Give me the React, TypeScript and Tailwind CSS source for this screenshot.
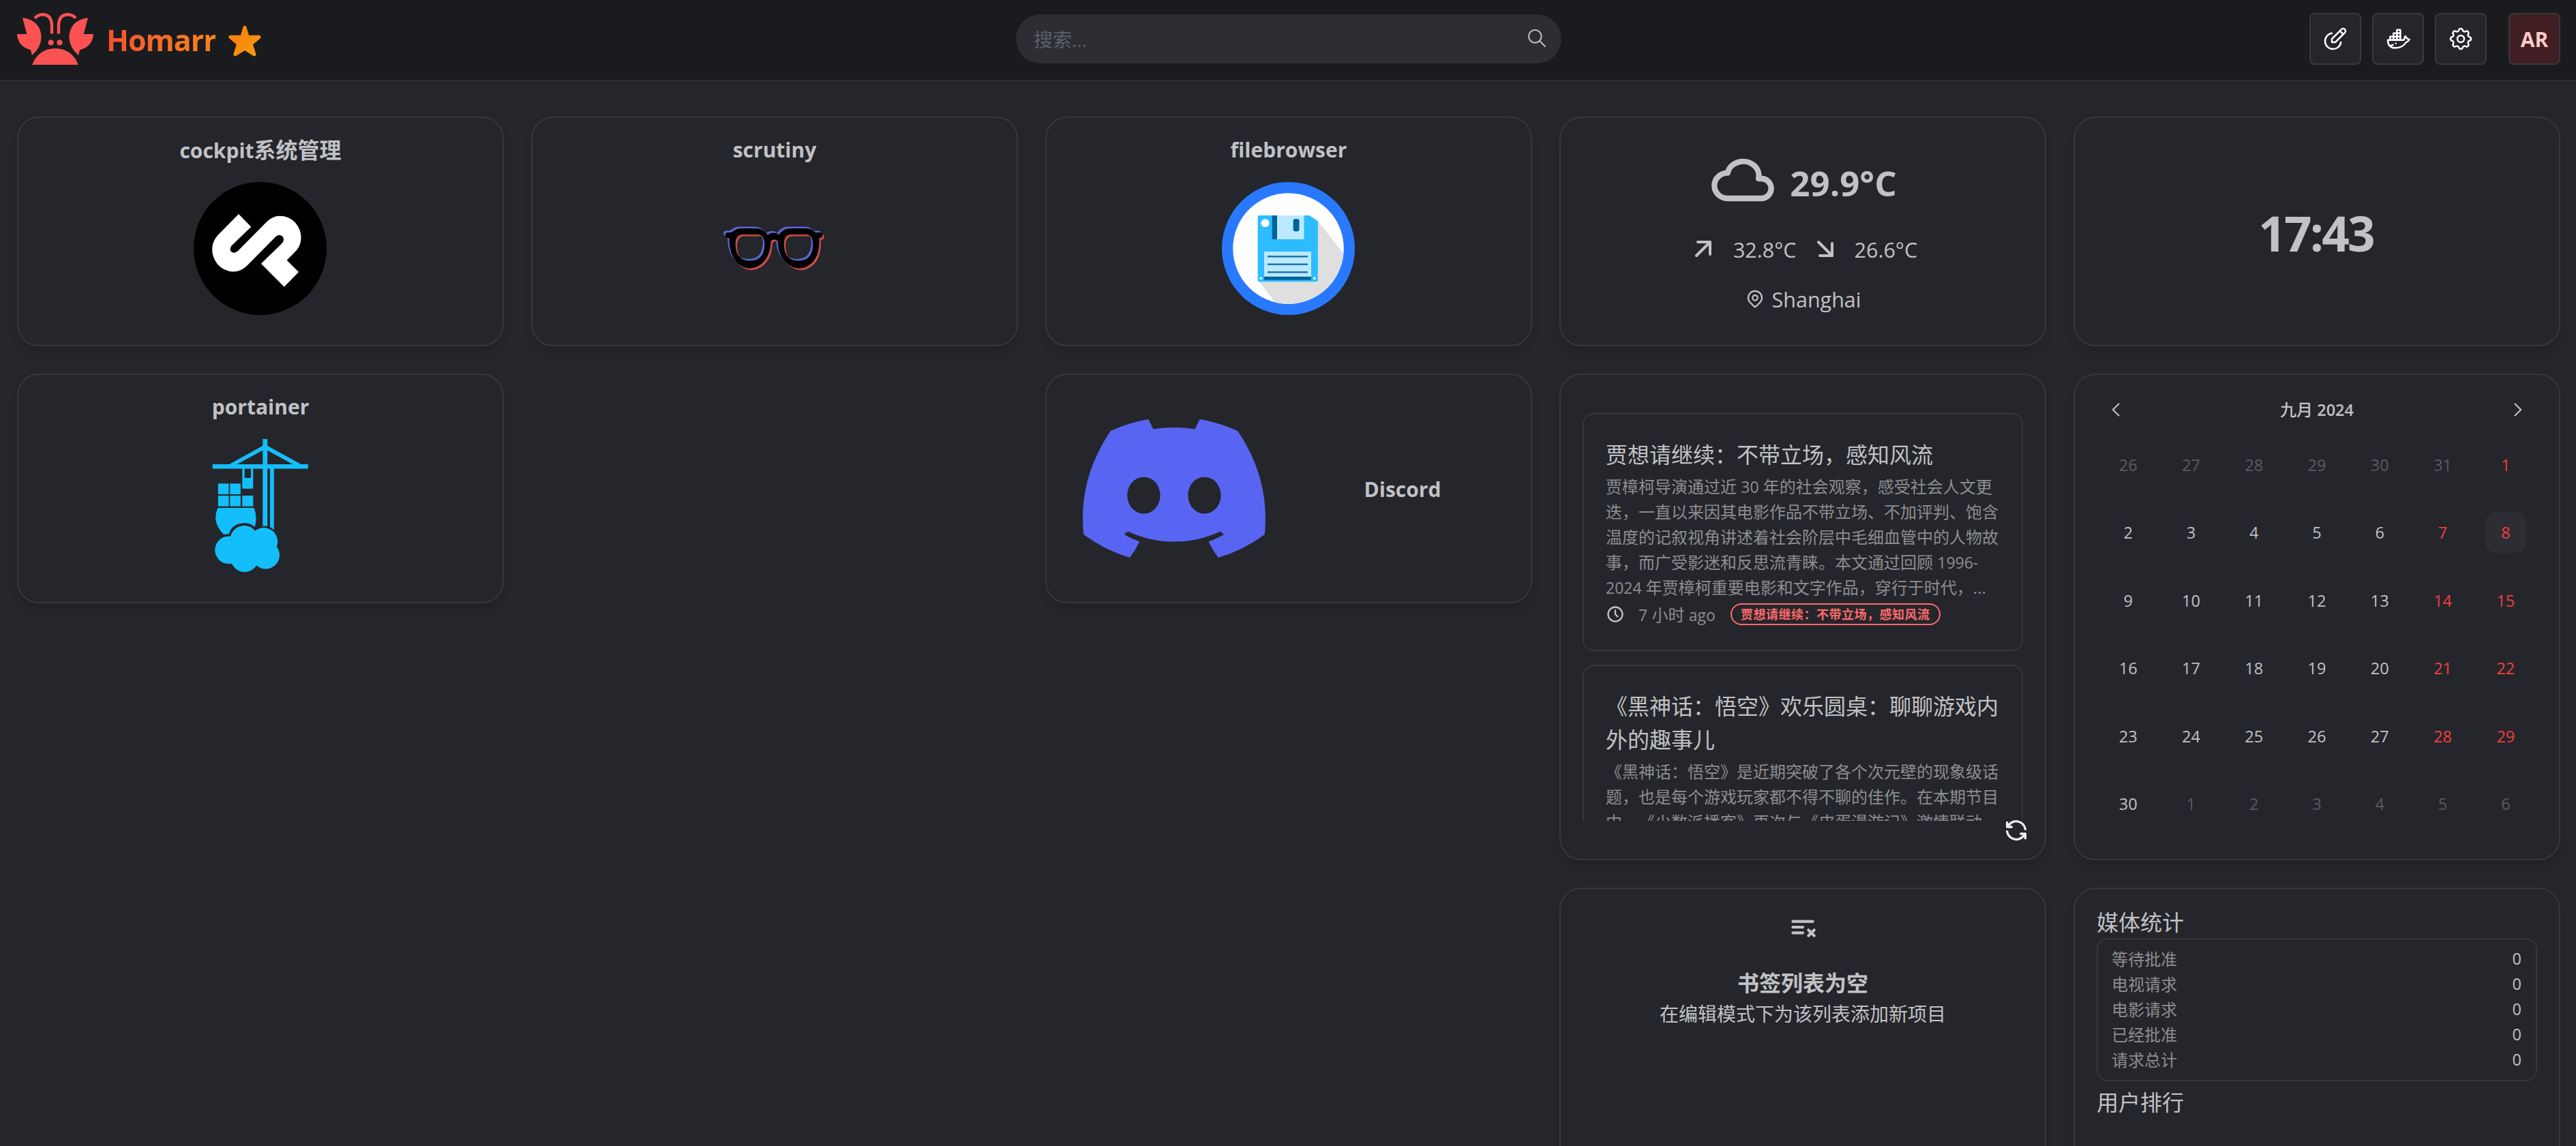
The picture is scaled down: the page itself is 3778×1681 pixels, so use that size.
import React from 'react';
import {
  TbArrowDownRight,
  TbArrowUpRight,
  TbBrandDocker,
  TbClock,
  TbCloud,
  TbEditCircle,
  TbMapPin,
  TbPlaylistX,
  TbRefresh,
  TbSearch,
  TbSettings,
} from 'react-icons/tb';

function Card({ className = '', children }: { className?: string; children?: React.ReactNode }) {
  return (
    <section
      className={`relative overflow-hidden rounded-[32px] border-2 border-[#36383e] bg-[#25262b] shadow-[0_10px_16px_-6px_rgba(0,0,0,0.18)] ${className}`}
    >
      {children}
    </section>
  );
}

function AppCard({ title, cjk, children }: { title: string; cjk?: string; children: React.ReactNode }) {
  return (
    <Card className="flex flex-col items-center pt-[25px]">
      <h2 className="h-[44px] text-[30px] leading-[44px] font-bold whitespace-nowrap">
        {title}
        {cjk && <span className="text-[32px]">{cjk}</span>}
      </h2>
      <div className="mt-[25px] -ml-px size-[195px]">{children}</div>
    </Card>
  );
}

function HomarrLogo() {
  const side = (
    <>
      <path d="M8 7Q35 11 35.6 36Q35 51 22 62L20 54.3Q1 49 0 31L14.3 31Z" fill="#fa5252" />
      <path d="M51 30.5V18Q50.5 2.4 37.5 2.2Q30.5 2.4 26 7.6" fill="none" stroke="#fa5252" strokeWidth="4.4" />
      <circle cx="49.6" cy="43.4" r="4.2" fill="#fa5252" />
    </>
  );
  return (
    <svg viewBox="0 0 112 76" className="h-[76px] w-[112px]">
      <g>{side}</g>
      <g transform="translate(112 0) scale(-1 1)">{side}</g>
      <path d="M22 76Q32 52 56 52Q80 52 90 76Z" fill="#fa5252" />
    </svg>
  );
}

function Star() {
  return (
    <svg viewBox="0 0 48.5 46" className="h-[46px] w-[48px]">
      <defs>
        <linearGradient id="star" x1="0" y1="0" x2="1" y2="1">
          <stop offset="0" stopColor="#f97c15" />
          <stop offset="1" stopColor="#f79c05" />
        </linearGradient>
      </defs>
      <path
        d="M24.2 3L28.4 17L45.6 17.2L33.6 27.4L38.4 43L24.2 34.2L10 43L14.8 27.4L2.8 17.2L20 17Z"
        fill="url(#star)"
        stroke="url(#star)"
        strokeWidth="5"
        strokeLinejoin="round"
      />
    </svg>
  );
}

function CockpitIcon() {
  return (
    <svg viewBox="0 0 195 195">
      <circle cx="97.5" cy="97.5" r="97.5" fill="#000" />
      <path
        d="M66 47L84.3 65.7L55.5 93.5Q52 99 55 102Q59 105.5 64.5 101.5L107 58.5Q116 49.7 126 49.7Q140 49.7 149 59.5Q158 70 157.5 83Q157 93 151 100L136.7 114.7L154 132L132.8 153.7L98.9 119.7L129.5 90Q133.5 85.5 131 80.5Q127 75.5 121 79.5L79 122Q70 131.5 58 131.5Q44 131 34.5 120Q26.5 109 27.2 97Q28 86 35.9 77.5Z"
        fill="#fff"
      />
    </svg>
  );
}

const GLASSES =
  'M28 74L33 74Q36 73.6 39 71Q43 68 48 68L70 68Q82 68 88 77.5Q91 74.5 97 74.5Q102 74.5 104 77.5Q110 68 121 68L145 68Q152 68 158 74L165 74Q168.5 75 168.3 78Q168 82 163.4 82.5Q164.8 108 151.5 120Q134 133.5 117 120Q103 108 103 88Q102 84.5 97.6 84.5Q93 84.5 92.4 88Q92 108 79 120Q61 133.5 45 120Q31 107 31.6 82.5Q26 82.5 25.6 78Q25.6 75 28 74ZM51 77Q41 77 40.6 91Q41 115.5 62 115.5Q83 115.5 83.4 91Q83 77 73 77ZM122 77Q112 77 111.8 91Q112 115.5 133 115.5Q154 115.5 154.2 91Q154 77 144 77Z';

function ScrutinyIcon() {
  return (
    <svg viewBox="0 0 195 195" fillRule="evenodd">
      <path d={GLASSES} fill="#5c68d6" transform="translate(-2.4 -2.4)" />
      <path d={GLASSES} fill="#cb4a4c" transform="translate(2.4 2.4)" />
      <path d={GLASSES} fill="#000" />
    </svg>
  );
}

function FileBrowserIcon() {
  return (
    <svg viewBox="0 0 195 195">
      <defs>
        <clipPath id="fb-disc">
          <circle cx="97.5" cy="97.5" r="81.3" />
        </clipPath>
      </defs>
      <circle cx="97.5" cy="97.5" r="97.5" fill="#2979ff" />
      <circle cx="97.5" cy="97.5" r="81.3" fill="#fff" />
      <path d="M140.7 57L185 113V195H93L54.5 146Z" fill="#dfdfdf" clipPath="url(#fb-disc)" />
      <path d="M55.3 49H128.5L140.8 57.5V143.5Q140.8 146.3 138 146.3H55.3Q52.6 146.3 52.6 143.5V51.5Q52.6 49 55.3 49Z" fill="#2cbcff" />
      <rect x="73.7" y="49" width="7.5" height="35" fill="#00639b" />
      <rect x="81" y="49" width="39.5" height="35" fill="#bbe9ff" />
      <rect x="104.6" y="54" width="9" height="18.5" rx="3.4" fill="#00639b" />
      <circle cx="63.5" cy="60.3" r="6" fill="#fff" />
      <rect x="62" y="102" width="69" height="37" fill="#bbe9ff" />
      <path d="M67 109.3H126M67 120.8H126M67 132.3H126" stroke="#1b78ab" strokeWidth="2.4" />
      <rect x="62" y="138.8" width="69" height="4.8" fill="#00639b" />
      <circle cx="57.2" cy="141.3" r="2" fill="#e6f7ff" />
      <circle cx="136" cy="141.3" r="2" fill="#e6f7ff" />
    </svg>
  );
}

function PortainerIcon() {
  return (
    <svg viewBox="0 0 195 195" fill="#13bef9">
      <rect x="101.3" y="0" width="6.9" height="127.7" />
      <path d="M112 43H117.8V133L112 129Z" />
      <rect x="27.7" y="37" width="140.2" height="6.5" />
      <path d="M104.7 8L52.4 37H63.5L104.7 14.8L145.3 37H157.6Z" />
      <path d="M71.3 43H74.7V57H84V43H87.3V72.7H71.3Z" />
      <rect x="35.9" y="65.3" width="15.6" height="15.7" />
      <rect x="53.3" y="65.3" width="15.6" height="15.7" />
      <rect x="35.9" y="83" width="15.6" height="15.7" />
      <rect x="53.3" y="83" width="15.6" height="15.7" />
      <rect x="71.3" y="83" width="16" height="15.7" />
      <path d="M35.4 101H88.5Q94 114 89.7 128.7Q83 123.3 74.2 123.3Q56 124 51.9 139.3L44.2 140Q26 122 35.4 101Z" />
      <circle cx="51.6" cy="162.8" r="20.3" />
      <circle cx="74.2" cy="147.5" r="20.6" />
      <circle cx="102.8" cy="150.5" r="20.4" />
      <circle cx="105.6" cy="170.2" r="20.4" />
      <circle cx="74.8" cy="174.6" r="20.4" />
      <path d="M60 150H108V180H60Z" />
    </svg>
  );
}

function DiscordIcon() {
  return (
    <svg viewBox="0 0 127.14 96.36" className="h-[203px] w-[268px] shrink-0" fill="#5865f2">
      <path d="M107.7,8.07A105.15,105.15,0,0,0,81.47,0a72.06,72.06,0,0,0-3.36,6.83A97.68,97.68,0,0,0,49,6.83,72.37,72.37,0,0,0,45.64,0,105.89,105.89,0,0,0,19.39,8.09C2.79,32.65-1.71,56.6.54,80.21h0A105.73,105.73,0,0,0,32.71,96.36,77.7,77.7,0,0,0,39.6,85.25a68.42,68.42,0,0,1-10.85-5.18c.91-.66,1.8-1.34,2.66-2a75.57,75.57,0,0,0,64.32,0c.87.71,1.76,1.39,2.66,2a68.68,68.68,0,0,1-10.87,5.19,77,77,0,0,0,6.89,11.1A105.25,105.25,0,0,0,126.6,80.22h0C129.24,52.84,122.09,29.11,107.7,8.07ZM42.45,65.69C36.18,65.69,31,60,31,53s5-12.74,11.43-12.74S54,46,53.89,53,48.84,65.69,42.45,65.69Zm42.24,0C78.41,65.69,73.25,60,73.25,53s5-12.74,11.44-12.74S96.23,46,96.12,53,91.08,65.69,84.69,65.69Z" />
    </svg>
  );
}

function HeaderButton({ children }: { children: React.ReactNode }) {
  return (
    <button className="flex size-[76px] items-center justify-center rounded-lg border-2 border-[#373a40] bg-[#25262b] text-white">
      {children}
    </button>
  );
}

function Header() {
  return (
    <header className="grid h-[119px] shrink-0 grid-cols-[1fr_800px_1fr] items-start border-b-2 border-[#2c2e33] bg-[#1a1b1e] pr-[23px] pl-[25px]">
      <div className="flex items-start pt-[19px]">
        <HomarrLogo />
        <span className="mt-[4px] ml-[19px] w-[160px] bg-linear-to-r from-[#f5502f] to-[#f8831a] bg-clip-text text-[43px] leading-[72px] font-bold tracking-[-1px] text-transparent">
          Homarr
        </span>
        <div className="mt-[18px] ml-[19px]">
          <Star />
        </div>
      </div>
      <div className="mt-[21px] flex h-[72px] items-center justify-between rounded-[36px] bg-[#2c2e33] pr-5 pl-[26px]">
        <span className="mt-[2px] text-[28px] leading-[44px] text-[#5c5f66]">搜索...</span>
        <TbSearch size={32} strokeWidth={1.5} className="-mt-[2px] text-[#c1c2c5]" />
      </div>
      <div className="flex items-start justify-end gap-4 pt-[19px]">
        <HeaderButton>
          <TbEditCircle size={40} strokeWidth={1.5} />
        </HeaderButton>
        <HeaderButton>
          <TbBrandDocker size={40} strokeWidth={1.5} />
        </HeaderButton>
        <HeaderButton>
          <TbSettings size={40} strokeWidth={1.5} />
        </HeaderButton>
        <div className="ml-4 flex size-[76px] items-center justify-center rounded-lg border-2 border-[#373a40] bg-[#411e21] text-[30px] leading-[40px] font-bold text-[#ffc9c9]">
          <span className="mt-[2px]">AR</span>
        </div>
      </div>
    </header>
  );
}

function Weather() {
  return (
    <Card className="flex flex-col items-center pt-[43px]">
      <div className="flex h-[100px] items-center">
        <TbCloud size={100} strokeWidth={2} />
        <span className="mt-[3px] ml-[19px] text-[51px] leading-[70px] font-bold">29.9°C</span>
      </div>
      <div className="mt-[25px] flex h-[48px] items-center text-[30.5px] leading-[48px]">
        <TbArrowUpRight size={48} strokeWidth={2} className="-ml-[2px]" />
        <span className="mt-px ml-[20px]">32.8°C</span>
        <TbArrowDownRight size={48} strokeWidth={2} className="ml-[18px]" />
        <span className="mt-px ml-[19px]">26.6°C</span>
      </div>
      <div className="mt-[26px] flex h-[48px] items-center text-[30.5px] leading-[48px]">
        <TbMapPin size={30} strokeWidth={1.8} className="-mt-[3px]" />
        <span className="ml-[10px]">Shanghai</span>
      </div>
    </Card>
  );
}

interface FeedItem {
  title: string[];
  body: React.ReactNode[];
  age?: React.ReactNode;
  tag?: string;
}

function L({ children }: { children: React.ReactNode }) {
  return <span className="text-[23px]">{children}</span>;
}

const FEED: FeedItem[] = [
  {
    title: ['贾想请继续：不带立场，感知风流'],
    body: [
      <>贾樟柯导演通过近 <L>30</L> 年的社会观察，感受社会人文更</>,
      '迭，一直以来因其电影作品不带立场、不加评判、饱含',
      '温度的记叙视角讲述着社会阶层中毛细血管中的人物故',
      <>事，而广受影迷和反思流青睐。本文通过回顾 <L>1996-</L></>,
      <><L>2024</L> 年贾樟柯重要电影和文字作品，穿行于时代，...</>,
    ],
    age: <><L>7</L> 小时 <L>ago</L></>,
    tag: '贾想请继续：不带立场，感知风流',
  },
  {
    title: ['《黑神话：悟空》欢乐圆桌：聊聊游戏内', '外的趣事儿'],
    body: [
      '《黑神话：悟空》是近期突破了各个次元壁的现象级话',
      '题，也是每个游戏玩家都不得不聊的佳作。在本期节目',
      '中，《少数派播客》再次与《皮蛋漫游记》激情联动，',
    ],
  },
];

function Feed() {
  return (
    <Card className="row-span-2 px-[32px] pt-[56px]">
      <div className="flex h-[598px] flex-col gap-5 overflow-hidden">
        {FEED.map((item) => (
          <article key={item.title[0]} className="shrink-0 rounded-2xl border-2 border-[#36383e] px-[32px] pt-[34px] pb-[33px] whitespace-nowrap">
            {item.title.map((line) => (
              <h3 key={line} className="h-[49px] text-[32px] leading-[49px]">{line}</h3>
            ))}
            <div className="mt-[4px] text-[24px] leading-[37px] text-[#8c8e92]">
              {item.body.map((line, i) => (
                <p key={i} className="h-[37px]">{line}</p>
              ))}
            </div>
            {item.tag && (
              <div className="mt-[2px] flex h-[38px] items-center">
                <TbClock size={28} strokeWidth={2} />
                <span className="ml-[20px] h-[37px] w-[135px] text-[24px] leading-[37px] text-[#8c8e92]">{item.age}</span>
                <span className="rounded-full border-2 border-[#ff6b6b] px-[13px] text-[18px] leading-[28px] font-bold tracking-[0.5px] text-[#ff6b6b]">
                  {item.tag}
                </span>
              </div>
            )}
          </article>
        ))}
      </div>
      <TbRefresh size={40} strokeWidth={2} className="absolute right-[22px] bottom-[22px] text-[#eceef0]" />
    </Card>
  );
}

const DAYS = [
  26, 27, 28, 29, 30, 31, 1, 2, 3, 4, 5, 6, 7, 8, 9, 10, 11, 12, 13, 14, 15, 16, 17, 18, 19, 20, 21, 22, 23, 24, 25, 26,
  27, 28, 29, 30, 1, 2, 3, 4, 5, 6,
];

function Chevron({ flip = false }: { flip?: boolean }) {
  return (
    <svg viewBox="0 0 12 20" className={`h-5 w-3 ${flip ? '-scale-x-100' : ''}`} fill="none">
      <path d="M10.4 1.4L1.8 10L10.4 18.6" stroke="#c1c2c5" strokeWidth="2.1" strokeLinecap="round" />
    </svg>
  );
}

function Calendar() {
  return (
    <Card className="row-span-2 px-[32px] pt-[31px]">
      <div className="flex h-[40px] items-center justify-between px-[22px]">
        <Chevron />
        <span className="text-[24px] leading-[40px] font-medium">
          九月 <span className="text-[23.5px] font-semibold">2024</span>
        </span>
        <Chevron flip />
      </div>
      <div className="mt-[11px] grid auto-rows-[99.5px] grid-cols-7 place-items-center text-[23.5px] leading-[36px]">
        {DAYS.map((day, i) => {
          const outside = i < 6 || i > 35;
          const weekend = i % 7 > 4;
          const tone = outside && i !== 6 ? 'text-[#585b61]' : weekend ? 'text-[#f03e3e]' : 'text-[#c1c2c5]';
          return (
            <div key={i} className={`flex size-[60px] items-center justify-center rounded-2xl ${tone} ${i === 13 ? 'bg-[#2c2e33]' : ''}`}>
              {day}
            </div>
          );
        })}
      </div>
    </Card>
  );
}

function Bookmarks() {
  return (
    <Card className="row-span-2 flex flex-col items-center pt-[31px]">
      <TbPlaylistX size={50} strokeWidth={2} />
      <h3 className="mt-[33px] text-[32px] leading-[48px] font-bold">书签列表为空</h3>
      <p className="text-[28px] leading-[42px]">在编辑模式下为该列表添加新项目</p>
    </Card>
  );
}

function MediaStats() {
  const rows = ['等待批准', '电视请求', '电影请求', '已经批准', '请求总计'];
  return (
    <Card className="row-span-2 px-[32px] pt-[25px]">
      <h3 className="text-[32px] leading-[48px]">媒体统计</h3>
      <dl className="-mt-px h-[210px] rounded-2xl border-2 border-[#36383e] px-5 pt-[10px] text-[24px] leading-[37px]">
        {rows.map((row) => (
          <div key={row} className="flex justify-between">
            <dt className="text-[#8c8e92]">{row}</dt>
            <dd className="pr-px text-[23.5px]">0</dd>
          </div>
        ))}
      </dl>
      <h3 className="mt-[7px] text-[32px] leading-[48px]">用户排行</h3>
    </Card>
  );
}

export default function App() {
  return (
    <div
      lang="zh-CN"
      className="flex h-[1681px] w-[3778px] flex-col overflow-hidden bg-[#25262b] font-['Open_Sans','Noto_Sans_CJK_SC',sans-serif] text-[#c1c2c5] [text-spacing-trim:space-all]"
    >
      <Header />
      <main className="grid auto-rows-[337px] grid-cols-[repeat(5,714px)] gap-10 pt-[52px] pl-[25px]">
        <AppCard title="cockpit" cjk="系统管理">
          <CockpitIcon />
        </AppCard>
        <AppCard title="scrutiny">
          <ScrutinyIcon />
        </AppCard>
        <AppCard title="filebrowser">
          <FileBrowserIcon />
        </AppCard>
        <Weather />
        <Card className="flex items-center justify-center">
          <span className="mt-[5px] -ml-[3px] text-[71px] leading-[98px] font-bold tracking-[-2.8px]">17:43</span>
        </Card>

        <AppCard title="portainer">
          <PortainerIcon />
        </AppCard>
        <div />
        <Card className="flex items-center pl-[53px]">
          <DiscordIcon />
          <span className="mt-[3px] flex-1 pr-[51px] pl-[64px] text-center text-[30px] leading-[44px] font-bold">Discord</span>
        </Card>
        <Feed />
        <Calendar />

        <div className="col-span-3 row-span-3" />
        <Bookmarks />
        <MediaStats />
      </main>
    </div>
  );
}
